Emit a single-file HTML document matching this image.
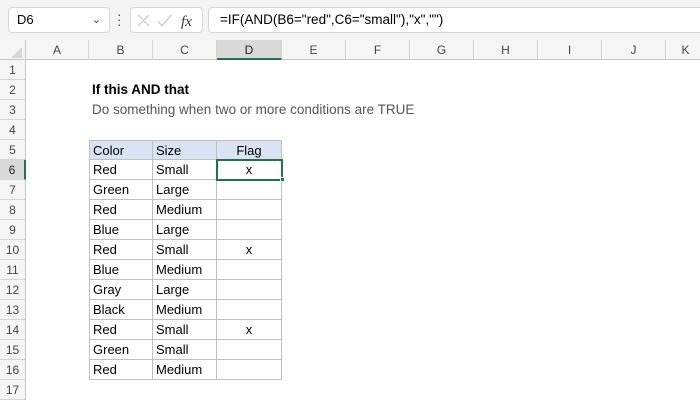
<!DOCTYPE html><html><head><style>
*{margin:0;padding:0;box-sizing:border-box}
body{width:700px;height:400px;overflow:hidden;background:#fff;font-family:"Liberation Sans",Calibri,sans-serif;font-size:13px;color:#000;position:relative}
.a{position:absolute}
.ch{position:absolute;top:40px;height:20px;line-height:20px;text-align:center;color:#444;font-size:12px;border-right:1px solid #d4d4d4;border-bottom:1px solid #c6c6c6;background:#f5f5f5}
.rh{position:absolute;left:0;width:26px;height:20px;line-height:20px;text-align:center;color:#444;font-size:12px;background:#f5f5f5;border-bottom:1px solid #d4d4d4;border-right:1px solid #c6c6c6}
.c{position:absolute;height:20px;line-height:20px;padding-left:3px;border-right:1px solid #bfbfbf;border-bottom:1px solid #bfbfbf}
</style></head><body>
<div class="a" style="left:0;top:0;width:700px;height:40px;background:#f3f3f3"></div>
<div class="a" style="left:8px;top:7px;width:102px;height:26px;background:#fff;border:1px solid #d8d8d8;border-radius:4px;padding-left:8px;line-height:24px;font-size:13px">D6<span class="a" style="right:8px;top:0;font-size:11px;color:#444">&#8964;</span></div>
<div class="a" style="left:117px;top:12px;width:3px;height:16px;font-size:14px;line-height:5px;color:#555">·<br>·<br>·</div>
<div class="a" style="left:130px;top:7px;width:73px;height:26px;background:#fff;border:1px solid #d8d8d8;border-radius:4px">
<svg width="73" height="26" class="a" style="left:0;top:0"><path d="M7 7l11 11M18 7L7 18" stroke="#c8c8c8" stroke-width="1.2" fill="none"/><path d="M27 13l4 5 9-11" stroke="#c8c8c8" stroke-width="1.2" fill="none"/><text x="50" y="18" font-family="Liberation Serif" font-style="italic" font-size="15" fill="#333">fx</text></svg></div>
<div class="a" style="left:208px;top:7px;width:500px;height:26px;background:#fff;border:1px solid #d8d8d8;border-radius:4px;padding-left:11px;line-height:24px;font-size:13.5px">=IF(AND(B6="red",C6="small"),"x","")</div>
<div class="a" style="left:0;top:40px;width:26px;height:20px;background:#f5f5f5;border-right:1px solid #c6c6c6;border-bottom:1px solid #c6c6c6"><svg width="26" height="20"><path d="M11 18L22 18L22 7Z" fill="#d6d6d6"/></svg></div>
<div class="ch" style="left:26px;width:63px">A</div>
<div class="ch" style="left:89px;width:64px">B</div>
<div class="ch" style="left:153px;width:64px">C</div>
<div class="ch" style="left:217px;width:65px;background:#d9d9d9;border-bottom:2px solid #217346;color:#222">D</div>
<div class="ch" style="left:282px;width:64px">E</div>
<div class="ch" style="left:346px;width:64px">F</div>
<div class="ch" style="left:410px;width:64px">G</div>
<div class="ch" style="left:474px;width:64px">H</div>
<div class="ch" style="left:538px;width:64px">I</div>
<div class="ch" style="left:602px;width:64px">J</div>
<div class="ch" style="left:666px;width:40px">K</div>
<div class="rh" style="top:60px">1</div><div class="rh" style="top:80px">2</div><div class="rh" style="top:100px">3</div><div class="rh" style="top:120px">4</div><div class="rh" style="top:140px">5</div>
<div class="rh" style="top:160px;background:#d9d9d9;border-right:2px solid #217346;color:#222">6</div>
<div class="rh" style="top:180px">7</div><div class="rh" style="top:200px">8</div><div class="rh" style="top:220px">9</div><div class="rh" style="top:240px">10</div><div class="rh" style="top:260px">11</div><div class="rh" style="top:280px">12</div><div class="rh" style="top:300px">13</div><div class="rh" style="top:320px">14</div><div class="rh" style="top:340px">15</div><div class="rh" style="top:360px">16</div><div class="rh" style="top:380px">17</div>
<div class="a" style="left:92px;top:80px;line-height:20px;font-weight:bold;font-size:13.5px">If this AND that</div>
<div class="a" style="left:92px;top:100px;line-height:20px;color:#555;font-size:13.5px">Do something when two or more conditions are TRUE</div>
<div class="a" style="left:89px;top:140px;width:193px;height:240px;border-left:1px solid #bfbfbf;border-top:1px solid #bfbfbf"></div>
<div class="c" style="left:89px;top:140px;width:64px;background:#dae3f3;border-left:1px solid #bfbfbf;border-top:1px solid #bfbfbf">Color</div>
<div class="c" style="left:153px;top:140px;width:64px;background:#dae3f3;border-top:1px solid #bfbfbf">Size</div>
<div class="c" style="left:217px;top:140px;width:65px;background:#dae3f3;border-top:1px solid #bfbfbf;text-align:center;padding:0">Flag</div>
<div id="rows"></div>
<script>
var d=[["Red","Small","x"],["Green","Large",""],["Red","Medium",""],["Blue","Large",""],["Red","Small","x"],["Blue","Medium",""],["Gray","Large",""],["Black","Medium",""],["Red","Small","x"],["Green","Small",""],["Red","Medium",""]];
var h="";d.forEach(function(r,i){var t=160+i*20;
h+='<div class="c" style="left:89px;top:'+t+'px;width:64px;border-left:1px solid #bfbfbf">'+r[0]+'</div><div class="c" style="left:153px;top:'+t+'px;width:64px">'+r[1]+'</div><div class="c" style="left:217px;top:'+t+'px;width:65px;text-align:center;padding:0">'+r[2]+'</div>';});
document.getElementById("rows").innerHTML=h;
</script>
<div class="a" style="left:216px;top:159px;width:67px;height:22px;border:2px solid #217346"></div>
<div class="a" style="left:280px;top:177px;width:5px;height:5px;background:#217346;border:1px solid #fff"></div>
</body></html>
